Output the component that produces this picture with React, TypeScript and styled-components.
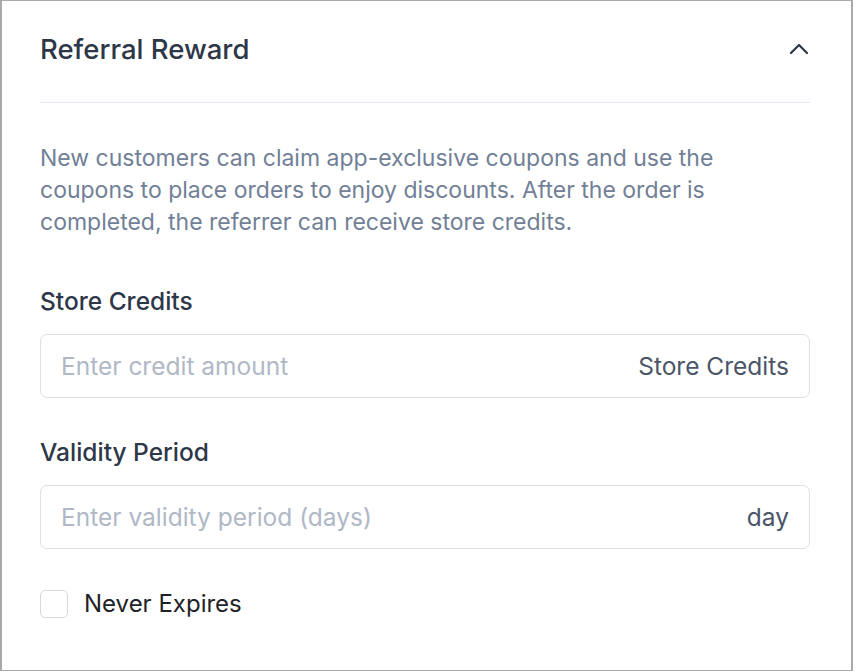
import React, { useState } from "react";
import styled, { createGlobalStyle } from "styled-components";

const GlobalStyle = createGlobalStyle`
  html, body {
    margin: 0;
    padding: 0;
    background: #ffffff;
  }
  body {
    font-family: Inter, "Noto Sans", sans-serif;
  }
`;

const Frame = styled.div`
  box-sizing: border-box;
  width: 853px;
  height: 671px;
  border-top: 1px solid #a9a9a9;
  border-left: 2px solid #a9a9a9;
  border-right: 2px solid #a9a9a9;
  border-bottom: 1px solid #a9a9a9;
  padding: 0 41px 0 38px;
  background: #fff;
`;

const Header = styled.div`
  display: flex;
  align-items: center;
  justify-content: space-between;
  height: 102px;
  border-bottom: 1px solid #e2e8f0;
  box-sizing: border-box;
  padding-bottom: 6px;
`;

const Title = styled.h2`
  margin: 0;
  font-size: 27.5px;
  font-weight: 500;
  color: #2d3748;
`;

const Toggle = styled.button`
  border: none;
  background: none;
  padding: 0;
  margin-right: 1px;
  display: flex;
  cursor: pointer;
`;

const Description = styled.p`
  margin: 39px 0 0;
  font-size: 23px;
  line-height: 32px;
  color: #718096;
`;

const Label = styled.div<{ $top: number }>`
  margin-top: ${(p) => p.$top}px;
  font-size: 24.5px;
  line-height: 32px;
  font-weight: 500;
  color: #2d3748;
`;

const InputBox = styled.div`
  margin-top: 17px;
  box-sizing: border-box;
  height: 64px;
  display: flex;
  align-items: center;
  border: 1px solid #dcdfe4;
  border-radius: 7px;
  padding: 0 20px;
`;

const Field = styled.input`
  flex: 1;
  min-width: 0;
  border: none;
  outline: none;
  background: transparent;
  font-family: inherit;
  font-size: 24.5px;
  color: #2d3748;
  padding: 0;

  &::placeholder {
    color: #b0b8c6;
  }
`;

const Suffix = styled.span`
  font-size: 24.5px;
  color: #4a5568;
`;

const CheckRow = styled.label`
  margin-top: 40px;
  display: flex;
  align-items: center;
  gap: 16px;
  cursor: pointer;
`;

const Box = styled.span<{ $on: boolean }>`
  box-sizing: border-box;
  width: 28px;
  height: 28px;
  border: 1px solid #d9d9d9;
  border-radius: 5px;
  background: ${(p) => (p.$on ? "#2d3748" : "#fff")};
`;

const CheckText = styled.span`
  font-size: 24px;
  color: #1f2329;
`;

export default function App() {
  const [never, setNever] = useState(false);
  return (
    <>
      <GlobalStyle />
      <Frame>
        <Header>
          <Title>Referral Reward</Title>
          <Toggle aria-label="Collapse">
            <svg width="20" height="12" viewBox="0 0 20 12" fill="none">
              <path d="M2 10 L10 2 L18 10" stroke="#2d3748" strokeWidth="2.2" strokeLinecap="round" strokeLinejoin="round" />
            </svg>
          </Toggle>
        </Header>
        <Description>
          New customers can claim app-exclusive coupons and use the coupons to place orders to enjoy discounts. After the order is completed, the referrer can receive store credits.
        </Description>
        <Label $top={47}>Store Credits</Label>
        <InputBox>
          <Field placeholder="Enter credit amount" />
          <Suffix>Store Credits</Suffix>
        </InputBox>
        <Label $top={38}>Validity Period</Label>
        <InputBox>
          <Field placeholder="Enter validity period (days)" />
          <Suffix>day</Suffix>
        </InputBox>
        <CheckRow onClick={() => setNever(!never)}>
          <Box $on={never} />
          <CheckText>Never Expires</CheckText>
        </CheckRow>
      </Frame>
    </>
  );
}
